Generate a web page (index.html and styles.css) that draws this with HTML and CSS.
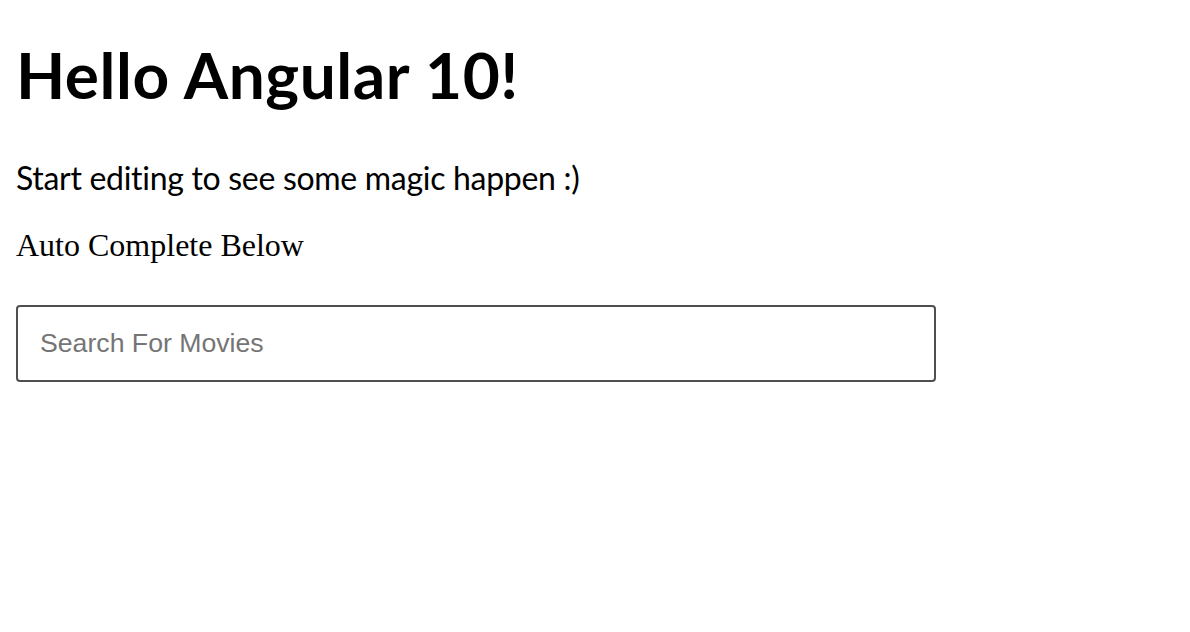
FILE: index.html
```html
<!DOCTYPE html>
<html>
<head>
<meta charset="utf-8">
<link rel="stylesheet" href="styles.css">
</head>
<body>
<main class="page">
  <h1 class="title">Hello Angular 10!</h1>
  <p class="lead">Start editing to see some magic happen :)</p>
  <div class="label">Auto Complete Below</div>
  <input class="search" type="text" placeholder="Search For Movies">
</main>
</body>
</html>
```

FILE: styles.css
```css
html, body {
  margin: 0;
  padding: 0;
  background: #fff;
}
.page {
  padding: 0 16px;
  font-family: Lato, "Liberation Sans", sans-serif;
  font-variant-ligatures: none;
  color: #000;
  display: flow-root;
}
.title {
  font-size: 64px;
  font-weight: 700;
  line-height: 76.8px;
  letter-spacing: 0.55px;
  margin: 37px 0 0;
}
.lead {
  font-size: 32px;
  line-height: 38.4px;
  letter-spacing: -0.3px;
  margin: 45px 0 0;
}
.label {
  font-family: "Liberation Serif", serif;
  font-size: 32px;
  line-height: 36px;
  margin-top: 30px;
}
.search {
  display: block;
  box-sizing: border-box;
  width: 920px;
  height: 77px;
  margin-top: 42px;
  border: 2px solid #4f4f4f;
  border-radius: 4px;
  padding: 0 22px;
  font-family: "Liberation Sans", Arial, sans-serif;
  font-size: 26.67px;
  color: #000;
  background: #fff;
  outline: none;
}
.search::placeholder {
  color: #757575;
}
```
